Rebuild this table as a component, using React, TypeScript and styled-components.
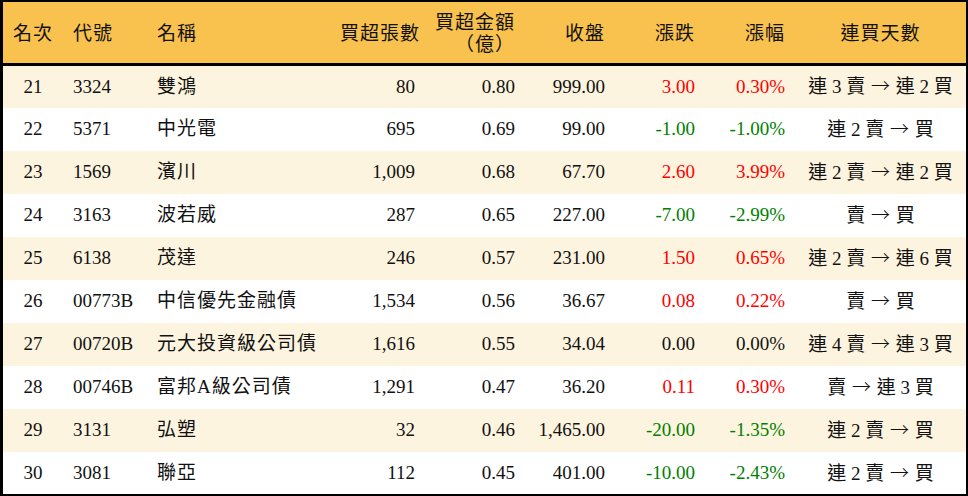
import React from 'react'
import styled, { createGlobalStyle } from 'styled-components'

const GlobalStyle = createGlobalStyle`
  html, body {
    margin: 0;
    padding: 0;
    background: #ffffff;
  }
  body {
    font-family: "Liberation Serif", "Noto Sans CJK TC", serif;
  }
`

type Align = 'left' | 'right' | 'center'
type Tone = 'up' | 'down' | 'flat'

const Wrapper = styled.div`
  width: 968px;
  height: 496px;
  box-sizing: border-box;
  border: 2px solid #000;
  border-left-width: 3px;
  overflow: hidden;
`

const Tabla = styled.table`
  width: 963px;
  table-layout: fixed;
  border-collapse: collapse;
  font-size: 19px;
  line-height: 22px;
  color: #111;
`

const Thead = styled.thead`
  background: #f9c14e;
  border-bottom: 3px solid #000;
`

const Th = styled.th<{ $align: Align }>`
  height: 59px;
  padding: 2px 10px 0;
  font-weight: normal;
  text-align: ${p => p.$align};
  letter-spacing: 1px;
  white-space: nowrap;
`

const Tr = styled.tr<{ $odd: boolean }>`
  height: 43px;
  background: ${p => (p.$odd ? '#fdf4df' : '#ffffff')};
`

const Td = styled.td<{ $align: Align; $tone?: Tone }>`
  padding: 0 10px;
  text-align: ${p => p.$align};
  white-space: nowrap;
  color: ${p => (p.$tone === 'up' ? '#ff0000' : p.$tone === 'down' ? '#008000' : '#111')};
`

const NameText = styled.span`
  letter-spacing: 1px;
`

const Arrow = styled.span`
  font-family: "Noto Sans CJK TC", sans-serif;
  font-weight: 300;
  line-height: 1;
  margin: 0 1px;
`

interface Fila {
  rank: number
  code: string
  name: string
  lots: string
  amount: string
  close: string
  change: string
  pct: string
  from: string
  to: string
}

const filas: Fila[] = [
  { rank: 21, code: '3324', name: '雙鴻', lots: '80', amount: '0.80', close: '999.00', change: '3.00', pct: '0.30%', from: '連 3 賣', to: '連 2 買' },
  { rank: 22, code: '5371', name: '中光電', lots: '695', amount: '0.69', close: '99.00', change: '-1.00', pct: '-1.00%', from: '連 2 賣', to: '買' },
  { rank: 23, code: '1569', name: '濱川', lots: '1,009', amount: '0.68', close: '67.70', change: '2.60', pct: '3.99%', from: '連 2 賣', to: '連 2 買' },
  { rank: 24, code: '3163', name: '波若威', lots: '287', amount: '0.65', close: '227.00', change: '-7.00', pct: '-2.99%', from: '賣', to: '買' },
  { rank: 25, code: '6138', name: '茂達', lots: '246', amount: '0.57', close: '231.00', change: '1.50', pct: '0.65%', from: '連 2 賣', to: '連 6 買' },
  { rank: 26, code: '00773B', name: '中信優先金融債', lots: '1,534', amount: '0.56', close: '36.67', change: '0.08', pct: '0.22%', from: '賣', to: '買' },
  { rank: 27, code: '00720B', name: '元大投資級公司債', lots: '1,616', amount: '0.55', close: '34.04', change: '0.00', pct: '0.00%', from: '連 4 賣', to: '連 3 買' },
  { rank: 28, code: '00746B', name: '富邦A級公司債', lots: '1,291', amount: '0.47', close: '36.20', change: '0.11', pct: '0.30%', from: '賣', to: '連 3 買' },
  { rank: 29, code: '3131', name: '弘塑', lots: '32', amount: '0.46', close: '1,465.00', change: '-20.00', pct: '-1.35%', from: '連 2 賣', to: '買' },
  { rank: 30, code: '3081', name: '聯亞', lots: '112', amount: '0.45', close: '401.00', change: '-10.00', pct: '-2.43%', from: '連 2 賣', to: '買' },
]

const toneOf = (v: string): Tone => {
  const n = parseFloat(v)
  if (n > 0) return 'up'
  if (n < 0) return 'down'
  return 'flat'
}

const anchos = [60, 84, 183, 95, 100, 90, 90, 90, 171]

export default function App() {
  return (
    <>
      <GlobalStyle />
      <Wrapper>
        <Tabla>
          <colgroup>
            {anchos.map((w, i) => (
              <col key={i} style={{ width: w }} />
            ))}
          </colgroup>
          <Thead>
            <tr>
              <Th $align="center">名次</Th>
              <Th $align="left">代號</Th>
              <Th $align="left">名稱</Th>
              <Th $align="right">買超張數</Th>
              <Th $align="right">
                買超金額
                <br />
                （億）
              </Th>
              <Th $align="right">收盤</Th>
              <Th $align="right">漲跌</Th>
              <Th $align="right">漲幅</Th>
              <Th $align="center">連買天數</Th>
            </tr>
          </Thead>
          <tbody>
            {filas.map((f, i) => (
              <Tr key={f.rank} $odd={i % 2 === 0}>
                <Td $align="center">{f.rank}</Td>
                <Td $align="left">{f.code}</Td>
                <Td $align="left">
                  <NameText>{f.name}</NameText>
                </Td>
                <Td $align="right">{f.lots}</Td>
                <Td $align="right">{f.amount}</Td>
                <Td $align="right">{f.close}</Td>
                <Td $align="right" $tone={toneOf(f.change)}>{f.change}</Td>
                <Td $align="right" $tone={toneOf(f.pct)}>{f.pct}</Td>
                <Td $align="center">
                  {f.from} <Arrow>→</Arrow> {f.to}
                </Td>
              </Tr>
            ))}
          </tbody>
        </Tabla>
      </Wrapper>
    </>
  )
}
